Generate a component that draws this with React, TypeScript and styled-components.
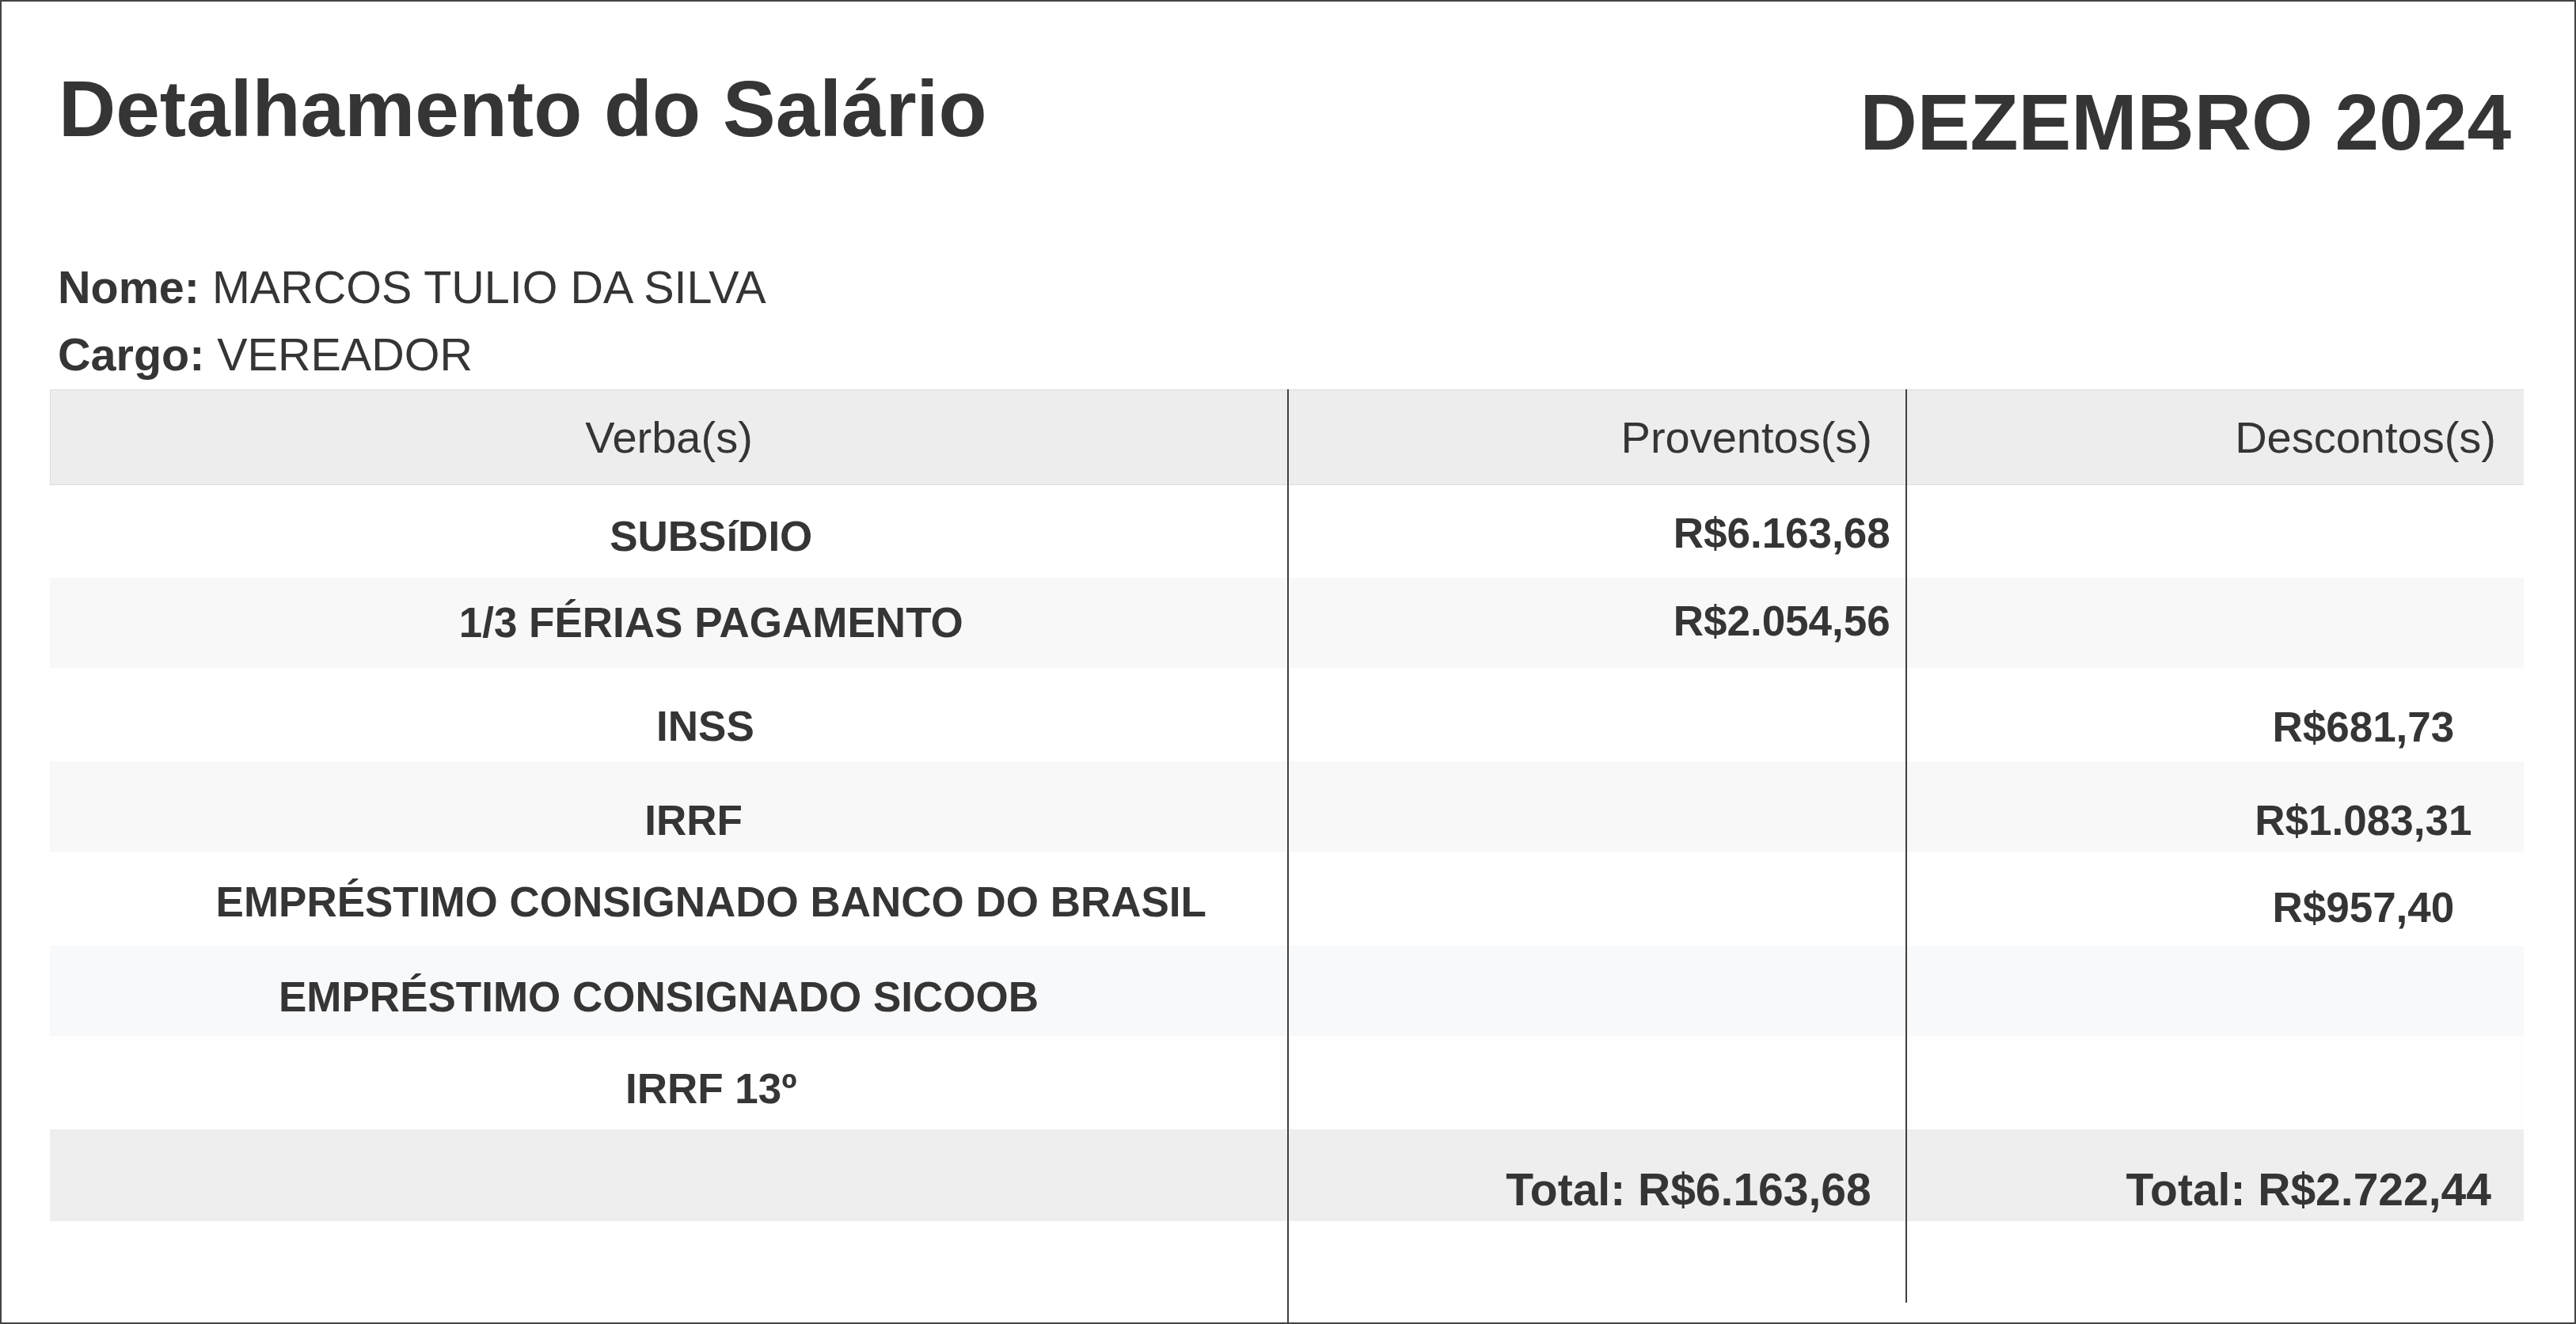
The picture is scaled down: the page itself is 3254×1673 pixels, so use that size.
import styled, { createGlobalStyle } from "styled-components";

const GlobalStyle = createGlobalStyle`
  html, body {
    margin: 0;
    padding: 0;
    background: #ffffff;
  }
  body {
    font-family: "Liberation Sans", Arial, sans-serif;
    color: #353535;
  }
`

const Sheet = styled.div`
  width: 3254px;
  height: 1673px;
  box-sizing: border-box;
  border: 2px solid #444444;
  background: #ffffff;
  display: flex;
  flex-direction: column;
`

const TopBar = styled.header`
  display: flex;
  justify-content: space-between;
  align-items: flex-start;
  padding: 85px 80px 0 72px;
`

const Title = styled.h1`
  margin: 0;
  font-size: 100px;
  line-height: 1;
  font-weight: 700;
`

const Period = styled.h2`
  margin: 17px 0 0;
  font-size: 100px;
  line-height: 1;
  font-weight: 700;
`

const Info = styled.div`
  margin-top: 117px;
  padding-left: 71px;
  font-size: 57.5px;
  line-height: 85px;
`

const InfoLine = styled.div`
  white-space: nowrap;

  strong {
    font-weight: 700;
  }
`

const Table = styled.div`
  position: relative;
  flex: 1;
  margin: 1px 64px 0 61px;
`

const Rule = styled.div<{ $left: string; $bottom: number }>`
  position: absolute;
  top: 0;
  bottom: ${(p) => p.$bottom}px;
  left: ${(p) => p.$left};
  width: 2px;
  background: #404040;
`

const Row = styled.div<{ $h: number; $bg: string }>`
  display: grid;
  grid-template-columns: 50% 25% 25%;
  height: ${(p) => p.$h}px;
  background: ${(p) => p.$bg};
  box-sizing: border-box;
`

const HeadRow = styled(Row)`
  border: 1px solid #dcdcdc;
  border-right: none;
  align-items: center;
`

const HeadCell = styled.div<{ $align: "center" | "right"; $pr?: number }>`
  font-size: 56px;
  line-height: 1;
  font-weight: 400;
  text-align: ${(p) => p.$align};
  padding-right: ${(p) => p.$pr ?? 0}px;
`

const Label = styled.div<{ $pt: number }>`
  padding: ${(p) => p.$pt}px 0 0 108px;
  font-size: 53px;
  line-height: 1;
  font-weight: 700;
  text-align: center;
  white-space: pre;
`

const Earning = styled.div<{ $pt: number }>`
  padding: ${(p) => p.$pt}px 19px 0 0;
  font-size: 53px;
  line-height: 1;
  font-weight: 700;
  text-align: right;
`

const Deduction = styled.div<{ $pt: number }>`
  padding: ${(p) => p.$pt}px 0 0 376px;
  font-size: 53px;
  line-height: 1;
  font-weight: 700;
  text-align: center;
`

const TotalCell = styled.div<{ $pr: number }>`
  padding: 48px ${(p) => p.$pr}px 0 0;
  font-size: 57px;
  line-height: 1;
  font-weight: 700;
  text-align: right;
`

type Verba = {
  label: string
  prov?: string
  desc?: string
  h: number
  bg: string
  lt: number
  at: number
}

// trailing spaces are kept on purpose (white-space: pre), they shift the centred text
const verbas: Verba[] = [
  { label: "SUBSíDIO", prov: "R$6.163,68", h: 117, bg: "#ffffff", lt: 38, at: 34 },
  { label: "1/3 FÉRIAS PAGAMENTO", prov: "R$2.054,56", h: 114, bg: "#f8f8f8", lt: 30, at: 28 },
  { label: "INSS ", desc: "R$681,73", h: 118, bg: "#ffffff", lt: 47, at: 48 },
  { label: "IRRF   ", desc: "R$1.083,31", h: 115, bg: "#f8f8f8", lt: 48, at: 48 },
  { label: "EMPRÉSTIMO CONSIGNADO BANCO DO BRASIL", desc: "R$957,40", h: 118, bg: "#ffffff", lt: 36, at: 43 },
  { label: "EMPRÉSTIMO CONSIGNADO SICOOB         ", h: 114, bg: "#f8f9fa", lt: 38, at: 38 },
  { label: "IRRF 13º", h: 118, bg: "#fefefe", lt: 40, at: 40 },
]

export default function App() {
  return (
    <>
      <GlobalStyle />
      <Sheet>
        <TopBar>
          <Title>Detalhamento do Salário</Title>
          <Period>DEZEMBRO 2024</Period>
        </TopBar>

        <Info>
          <InfoLine>
            <strong>Nome:</strong> MARCOS TULIO DA SILVA
          </InfoLine>
          <InfoLine>
            <strong>Cargo:</strong> VEREADOR
          </InfoLine>
        </Info>

        <Table>
          <HeadRow $h={121} $bg="#ededed">
            <HeadCell $align="center">Verba(s)</HeadCell>
            <HeadCell $align="right" $pr={42}>Proventos(s)</HeadCell>
            <HeadCell $align="right" $pr={35}>Descontos(s)</HeadCell>
          </HeadRow>

          {verbas.map((v) => (
            <Row key={v.label} $h={v.h} $bg={v.bg}>
              <Label $pt={v.lt}>{v.label}</Label>
              <Earning $pt={v.at}>{v.prov ?? ""}</Earning>
              <Deduction $pt={v.at}>{v.desc ?? ""}</Deduction>
            </Row>
          ))}

          <Row $h={116} $bg="#eeeeee">
            <div />
            <TotalCell $pr={43}>Total: R$6.163,68</TotalCell>
            <TotalCell $pr={41}>Total: R$2.722,44</TotalCell>
          </Row>

          <Rule $left="50%" $bottom={0} />
          <Rule $left="75%" $bottom={25} />
        </Table>
      </Sheet>
    </>
  )
}
